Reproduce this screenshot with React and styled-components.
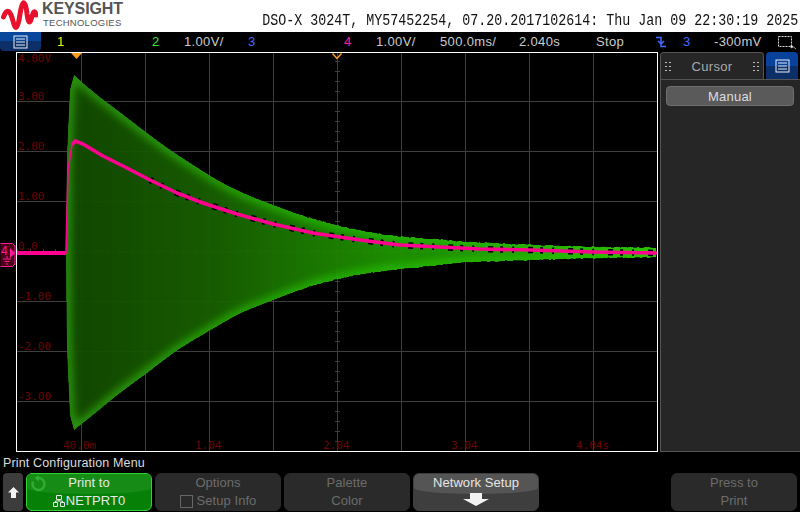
import React from 'react'
import styled, { createGlobalStyle } from 'styled-components'

const GlobalStyle = createGlobalStyle`
  html, body { margin: 0; padding: 0; background: #000; }
  body { font-family: 'Liberation Sans', Arial, sans-serif; }
`

// envelope of the green ringing, read off the screen in page pixels
const UPPER = [[66, 253], [67, 157], [70, 90], [74, 75], [93, 92], [117, 110], [143, 130], [167, 148], [193, 165], [220, 182], [247, 195], [273, 205], [300, 215], [327, 223], [360, 231], [393, 236], [420, 238], [465, 242], [529, 245], [593, 247], [657, 248]]
const LOWER = [[66, 252], [67, 348], [70, 415], [74, 430], [93, 415], [117, 395], [147, 373], [177, 350], [207, 332], [240, 313], [273, 300], [307, 287], [340, 278], [373, 272], [420, 267], [465, 262], [529, 260], [593, 258], [657, 257]]
const TRACE = [[17, 253], [66, 253], [68, 170], [72, 145], [75, 141], [83, 144], [103, 156], [127, 168], [150, 180], [177, 193], [203, 203], [237, 214], [273, 224], [313, 233], [360, 240], [400, 245], [420, 246], [480, 249], [530, 250], [593, 252], [657, 253]]

const VLINES = [81, 145, 209, 273, 337, 401, 465, 529, 593]
const HLINES = [101, 151, 201, 251, 301, 351, 401]
const Y_LABELS = [['4.00V', 62], ['3.00', 100], ['2.00', 150], ['1.00', 200], ['0.0', 250], ['-1.00', 300], ['-2.00', 350], ['-3.00', 400]]
const X_LABELS = [['40.0m', 63], ['1.04', 195], ['2.04', 323], ['3.04', 451], ['4.04s', 576]]

let seed = 17
const rnd = () => {
  seed = (seed * 1103515245 + 12345) & 0x7fffffff
  return seed / 0x7fffffff
}

const at = (pts, x) => {
  for (let i = 1; i < pts.length; i++) {
    if (x <= pts[i][0]) {
      const [x0, y0] = pts[i - 1]
      const [x1, y1] = pts[i]
      return y0 + ((y1 - y0) * (x - x0)) / (x1 - x0)
    }
  }
  return pts[pts.length - 1][1]
}

// moving average so the hand-read points don't show as kinks
const smooth = (pts, x) => {
  const r = Math.min(10, Math.max(0, x - 76))
  let sum = 0
  for (let d = -2; d <= 2; d++) sum += at(pts, x + (d * r) / 2)
  return sum / 5
}

const sample = (pts, dir) => {
  const out = pts.filter((q) => q[0] < 75)
  for (let x = 76; x <= 657; x += 2) {
    const noise = x > 300 ? (rnd() - 0.4) * 1.2 : 0
    out.push([x, smooth(pts, x) + dir * noise])
  }
  return out
}

const str = (pts) => pts.map((p) => p.join(',')).join(' ')
const envelope = str([...sample(UPPER, -1), ...sample(LOWER, 1).reverse()])

const Screen = styled.div`
  width: 800px;
  height: 512px;
  display: flex;
  flex-direction: column;
  overflow: hidden;
  background: #000;
`

const Header = styled.header`
  height: 32px;
  background: #fff;
  display: flex;
  justify-content: space-between;
  padding: 0 2px 0 1px;
`

const Logo = styled.div`
  display: flex;
  gap: 4px;
`

const Brand = styled.div`
  display: flex;
  flex-direction: column;
  color: #555;
  line-height: 1;
`

const BrandName = styled.span`
  font-size: 16px;
  font-weight: 700;
  letter-spacing: -0.1px;
  margin-top: 1px;
`

const BrandSub = styled.span`
  font-size: 9.5px;
  letter-spacing: 0.25px;
  margin-top: 1px;
  margin-left: 1px;
`

const Title = styled.div`
  font-family: 'Liberation Mono', monospace;
  font-size: 16px;
  line-height: 18px;
  color: #111;
  white-space: pre;
  align-self: flex-end;
  margin-bottom: 2px;
  transform: scaleX(0.8333);
  transform-origin: right center;
`

const StatusBar = styled.div`
  height: 20px;
  display: flex;
  align-items: center;
  font-size: 13px;
  letter-spacing: 0.35px;
  color: #ccc;
`

const MenuButton = styled.div`
  width: 41px;
  height: 19px;
  margin-right: 16px;
  align-self: flex-start;
  display: flex;
  align-items: center;
  justify-content: center;
  border-radius: 0 0 4px 4px;
  background: linear-gradient(#08479c 0 50%, #0c2f68 50%);
`

const Cell = styled.span`
  width: ${(p) => p.$w}px;
  height: 18px;
  margin-bottom: 1px;
  flex: none;
  color: ${(p) => p.$color || '#ccc'};
  display: flex;
  align-items: center;
`

const Main = styled.main`
  height: 400px;
  display: flex;
`

const Gutter = styled.div`
  width: 16px;
  flex: none;
  position: relative;
`

const GroundMarker = styled.svg`
  position: absolute;
  left: 0;
  top: 191px;
`

const Plot = styled.svg`
  width: 642px;
  height: 400px;
  flex: none;
  display: block;
`

const AxisText = styled.text`
  font-family: 'DejaVu Sans Mono', 'Liberation Mono', monospace;
  font-size: 11px;
  fill: #6e0404;
`

const Side = styled.aside`
  width: 140px;
  margin-left: 2px;
  flex: none;
  display: flex;
  flex-direction: column;
  background: #262626;
  border-bottom: 1px solid #555;
`

const SideTabs = styled.div`
  height: 28px;
  flex: none;
  display: flex;
  background: #000;
`

const CursorTab = styled.div`
  width: 104px;
  box-sizing: border-box;
  display: flex;
  align-items: center;
  justify-content: space-between;
  padding: 0 4px;
  background: #262626;
  border: 1px solid #555;
  border-bottom: none;
  border-radius: 4px 4px 0 0;
  color: #aaa;
  font-size: 13px;
  letter-spacing: 0.3px;
`

const Grip = styled.svg`
  display: block;
`

const BlueTab = styled.div`
  width: 32px;
  margin-left: 2px;
  display: flex;
  align-items: center;
  justify-content: center;
  border-radius: 4px 4px 0 0;
  background: linear-gradient(#08429c 0 50%, #0c2f68 50%);
`

const SideBody = styled.div`
  flex: 1;
  padding: 6px 5px;
  border-left: 1px solid #555;
  border-top: 1px solid #555;
  border-right: 1px solid #262626;
  margin-top: -1px;
`

const PillButton = styled.div`
  height: 20px;
  box-sizing: border-box;
  display: flex;
  align-items: center;
  justify-content: center;
  border: 1px solid #6e6e6e;
  border-radius: 4px;
  background: #5a5a5a;
  color: #ddd;
  font-size: 13px;
  letter-spacing: 0.2px;
`

const Footer = styled.footer`
  flex: 1;
  display: flex;
  flex-direction: column;
  padding: 4px 3px 1px;
`

const MenuTitle = styled.div`
  height: 17px;
  font-size: 12.5px;
  letter-spacing: 0.15px;
  line-height: 14px;
  color: #ddd;
`

const Keys = styled.div`
  display: flex;
  gap: 3px;
  height: 38px;
`

const UpKey = styled.div`
  width: 20px;
  border-radius: 4px;
  background: #3c3c3c;
  display: flex;
  align-items: center;
  justify-content: center;
`

const KEY_LOOK = {
  green: 'background:#078007;color:#e8e8e8;border:1px solid #2fd42f;',
  active: 'background:#3e3e3e;color:#e6e6e6;border:1px solid #3e3e3e;',
  dim: 'background:#2a2a2a;color:#6c6c6c;border:1px solid #2a2a2a;'
}

const KEY_BEZEL = { green: '#168c16', active: '#555', dim: '#2a2a2a' }

const SoftKey = styled.div`
  position: relative;
  width: 126px;
  box-sizing: border-box;
  border-radius: 6px;
  overflow: hidden;
  display: flex;
  flex-direction: column;
  align-items: center;
  font-size: 13px;
  letter-spacing: 0.05px;
  line-height: 18px;
  ${(p) => KEY_LOOK[p.$look]}
  &::before {
    content: '';
    position: absolute;
    left: 0;
    right: 0;
    top: 0;
    height: 20px;
    background: ${(p) => KEY_BEZEL[p.$look]};
    border-radius: 0 0 50% 50% / 0 0 6px 6px;
  }
`

const KeyLine = styled.span`
  position: relative;
  display: flex;
  align-items: center;
  gap: ${(p) => p.$gap ?? 4}px;
  white-space: pre;
`

const Checkbox = styled.span`
  width: 13px;
  height: 13px;
  box-sizing: border-box;
  border: 1px solid #666;
`

const SpareKey = styled.div`
  width: 126px;
`

const LoopIcon = styled.svg`
  position: absolute;
  left: 2px;
  top: 1px;
`

const ListIcon = () => (
  <svg width="15" height="14" viewBox="0 0 15 14">
    <rect x="1" y="1" width="13" height="12" fill="none" stroke="#e8eef8" />
    <path d="M3 4h9M3 7h9M3 10h9" stroke="#e8eef8" />
  </svg>
)

const TriggerIcon = () => (
  <svg width="11" height="14" viewBox="0 0 11 14">
    <path d="M1 2.500h5v9h5M3 6l3 3 3-3" fill="none" stroke="#3f6cff" strokeWidth="1.5" />
  </svg>
)

const SelectIcon = () => (
  <svg width="20" height="16" viewBox="0 0 20 16">
    <rect x="1.5" y="2.5" width="13" height="10" fill="none" stroke="#ddd" strokeDasharray="2 1" />
    <path d="M14 11l5 4M14 11v3l2-1z" fill="#ddd" stroke="#ddd" strokeWidth="0.7" />
  </svg>
)

const Dots = () => (
  <Grip width="6" height="9" viewBox="0 0 6 9">
    <path d="M0 0h2v1H0zM4 0h2v1H4zM0 4h2v1H0zM4 4h2v1H4zM0 8h2v1H0zM4 8h2v1H4z" fill="#bbb" />
  </Grip>
)

const NetIcon = () => (
  <svg width="12" height="12" viewBox="0 0 12 12">
    <path d="M3.500.5h5v4h-5zM.5 7.500h4v4h-4zM7.500 7.500h4v4h-4zM6 4.500v1.500M2.500 7.500V6h7v1.500" fill="none" stroke="#e8e8e8" />
  </svg>
)

const Waveform = () => (
  <>
    <defs>
      <linearGradient id="body" gradientUnits="userSpaceOnUse" x1="66" x2="657" y1="0" y2="0">
        <stop offset="0" stopColor="#124a00" />
        <stop offset="0.25" stopColor="#186000" />
        <stop offset="0.55" stopColor="#1e9400" />
        <stop offset="1" stopColor="#24ac00" />
      </linearGradient>
      <linearGradient id="edge" gradientUnits="userSpaceOnUse" x1="66" x2="657" y1="0" y2="0">
        <stop offset="0" stopColor="#2fa010" />
        <stop offset="0.4" stopColor="#24b800" />
        <stop offset="1" stopColor="#2cc800" />
      </linearGradient>
      <clipPath id="inside">
        <polygon points={envelope} />
      </clipPath>
      <filter id="soft" x="-5%" y="-5%" width="110%" height="110%">
        <feGaussianBlur stdDeviation="4" />
      </filter>
    </defs>
    <polygon points={envelope} fill="url(#body)" fillOpacity="0.94" shapeRendering="crispEdges" />
    <g clipPath="url(#inside)">
      <polygon points={envelope} fill="none" stroke="url(#edge)" strokeOpacity="0.9" strokeWidth="9" filter="url(#soft)" />
    </g>
    <polyline points={str(TRACE.slice(8))} fill="none" stroke="#000" strokeWidth="6.5" strokeDasharray="3 9 2 14 5 7" />
    <polyline points={str(TRACE.slice(0, 4))} fill="none" stroke="#ff0090" strokeWidth="1.6" />
    <polyline points={str(TRACE.slice(0, 2))} fill="none" stroke="#ff0090" strokeWidth="4" shapeRendering="crispEdges" />
    <polyline points={str(TRACE.slice(3))} fill="none" stroke="#ff0090" strokeWidth="3.6" strokeLinejoin="round" />
  </>
)

const Graticule = () => (
  <g stroke="#3e3e3e" shapeRendering="crispEdges">
    {VLINES.map((x) => <line key={x} x1={x + 0.5} x2={x + 0.5} y1="52" y2="451" />)}
    {HLINES.map((y) => <line key={y} x1="17" x2="657" y1={y + 0.5} y2={y + 0.5} />)}
    {Array.from({ length: 39 }, (_, i) => 61 + i * 10).map((y) => (
      <line key={y} x1="335" x2="340" y1={y + 0.5} y2={y + 0.5} />
    ))}
    {Array.from({ length: 50 }, (_, i) => 17 + i * 12.8).map((x) => (
      <line key={x} x1={Math.round(x) + 0.5} x2={Math.round(x) + 0.5} y1="249" y2="254" />
    ))}
  </g>
)

export default function App() {
  return (
    <Screen>
      <GlobalStyle />
      <Header>
        <Logo>
          <svg width="37" height="31" viewBox="0 0 37 31">
            <path
              d="M2.500 17Q5 10 7.500 11.500Q10 13 12 21Q14 29 15.500 27Q17.500 25 19 14Q21 2 23 3Q25 4 26 14Q27.500 25 29.500 21Q31 16 32.500 12.500Q34 10.500 35 15"
              fill="none"
              stroke="#e8112d"
              strokeWidth="5"
              strokeLinecap="round"
            />
          </svg>
          <Brand>
            <BrandName>KEYSIGHT</BrandName>
            <BrandSub>TECHNOLOGIES</BrandSub>
          </Brand>
        </Logo>
        <Title>DSO-X 3024T, MY57452254, 07.20.2017102614: Thu Jan 09 22:30:19 2025</Title>
      </Header>

      <StatusBar>
        <MenuButton><ListIcon /></MenuButton>
        <Cell $w={95} $color="#f4f000">1</Cell>
        <Cell $w={32} $color="#3fe43f">2</Cell>
        <Cell $w={64}>1.00V/</Cell>
        <Cell $w={96} $color="#3f6cff">3</Cell>
        <Cell $w={32} $color="#ff1a9c">4</Cell>
        <Cell $w={64}>1.00V/</Cell>
        <Cell $w={79}>500.0ms/</Cell>
        <Cell $w={77}>2.040s</Cell>
        <Cell $w={59}>Stop</Cell>
        <Cell $w={28}><TriggerIcon /></Cell>
        <Cell $w={31} $color="#3f6cff">3</Cell>
        <Cell $w={63}>-300mV</Cell>
        <Cell $w={20}><SelectIcon /></Cell>
      </StatusBar>

      <Main>
        <Gutter>
          <GroundMarker width="16" height="24" viewBox="0 0 16 24">
            <path d="M.5.5h12l2.500 2.500v18l-2.500 2.500H.5" fill="#4c0018" stroke="#ff1a9c" />
            <text x="1" y="12" fontFamily="Liberation Sans" fontSize="12" fill="#ff1a9c">4</text>
            <path d="M10 5l5 5-5 5z" fill="#ff1a9c" />
            <path d="M7 13v3M3 16h8M4.500 18.500h5M6 21h2" stroke="#ff1a9c" fill="none" />
          </GroundMarker>
        </Gutter>

        <Plot viewBox="16 52 642 400">
          <rect x="16" y="52" width="642" height="400" fill="#000" />
          <Graticule />
          <Waveform />
          {Y_LABELS.map(([t, y]) => <AxisText key={t} x="18" y={y}>{t}</AxisText>)}
          {X_LABELS.map(([t, x]) => <AxisText key={t} x={x} y="449">{t}</AxisText>)}
          <path d="M71 53h11l-5.500 6z" fill="#ff9c1a" />
          <path d="M332.500 53.500l4.500 5 4.500-5" fill="none" stroke="#ff9c1a" strokeWidth="1.5" />
          <path d="M16.500 52v400M16 52.500h642M657.500 52v400M16 451.500h642" stroke="#fff" fill="none" shapeRendering="crispEdges" />
        </Plot>

        <Side>
          <SideTabs>
            <CursorTab>
              <Dots />
              <span>Cursor</span>
              <Dots />
            </CursorTab>
            <BlueTab><ListIcon /></BlueTab>
          </SideTabs>
          <SideBody>
            <PillButton>Manual</PillButton>
          </SideBody>
        </Side>
      </Main>

      <Footer>
        <MenuTitle>Print Configuration Menu</MenuTitle>
        <Keys>
          <UpKey>
            <svg width="11" height="11" viewBox="0 0 11 11">
              <path d="M5.500 0L11 5.500H8V11H3V5.500H0z" fill="#f2f2f2" />
            </svg>
          </UpKey>
          <SoftKey $look="green">
            <LoopIcon width="18" height="18" viewBox="0 0 18 18">
              <path d="M4 6.500A6 6 0 1 0 9 3" fill="none" stroke="#2fae2f" strokeWidth="2.4" />
              <path d="M10 0v6.500L5.500 3z" fill="#2fae2f" />
            </LoopIcon>
            <KeyLine>Print to</KeyLine>
            <KeyLine $gap={1}><NetIcon />NETPRT0</KeyLine>
          </SoftKey>
          <SoftKey $look="dim">
            <KeyLine>Options</KeyLine>
            <KeyLine><Checkbox />Setup Info</KeyLine>
          </SoftKey>
          <SoftKey $look="dim">
            <KeyLine>Palette</KeyLine>
            <KeyLine>Color</KeyLine>
          </SoftKey>
          <SoftKey $look="active">
            <KeyLine>Network Setup</KeyLine>
            <KeyLine>
              <svg width="26" height="15" viewBox="0 0 26 15">
                <path d="M7 1h12v6h7L13 14 0 7h7z" fill="#f2f2f2" />
              </svg>
            </KeyLine>
          </SoftKey>
          <SpareKey />
          <SoftKey $look="dim">
            <KeyLine>Press to</KeyLine>
            <KeyLine>Print</KeyLine>
          </SoftKey>
        </Keys>
      </Footer>
    </Screen>
  )
}
